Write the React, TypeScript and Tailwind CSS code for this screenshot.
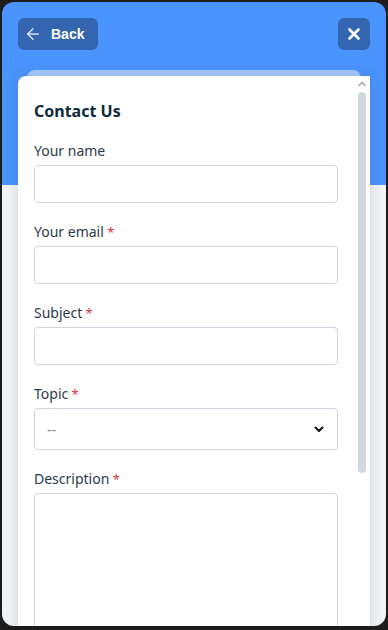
import React from "react";

const font = { fontFamily: '"Noto Sans", "Open Sans", sans-serif' };

function Label({ text, required }: { text: string; required?: boolean }) {
  return (
    <div className="text-[14px] leading-[20px] text-[#2d3a48] mb-1">
      {text}
      {required && <span className="text-[#e0303c] text-[13px]"> *</span>}
    </div>
  );
}

function Input() {
  return <div className="h-[38px] rounded-[4px] border border-[#cdd5df] bg-white" />;
}

export default function App() {
  return (
    <div className="h-[630px] w-[388px] bg-[#1c1c1c] pt-[2px] px-[2px] pb-[4px]" style={font}>
      <div className="relative h-[624px] w-[384px] overflow-hidden rounded-[12px] bg-[linear-gradient(to_bottom,#4a94fd_183px,#f1f3f6_183px)] flex flex-col">
        <div className="flex items-center justify-between px-4 pt-4">
          <button className="flex h-8 items-center gap-[9px] rounded-[6px] bg-[#3365b1] pl-[6px] pr-[14px] text-white">
            <svg width="18" height="18" viewBox="0 0 24 24" fill="none" stroke="rgba(255,255,255,0.8)" strokeWidth="2" strokeLinecap="round" strokeLinejoin="round">
              <path d="M19 12H5" />
              <path d="M12 19l-7-7 7-7" />
            </svg>
            <span className="text-[14px] font-bold" style={{ fontFamily: '"Liberation Sans", Arial, sans-serif' }}>Back</span>
          </button>
          <button className="flex h-8 w-8 items-center justify-center rounded-[6px] bg-[#3365b1]">
            <svg width="14" height="14" viewBox="0 0 14 14" fill="none" stroke="white" strokeWidth="2.6" strokeLinecap="round">
              <path d="M2.5 2.5l9 9M11.5 2.5l-9 9" />
            </svg>
          </button>
        </div>
        <div className="mt-5 flex flex-1 flex-col px-4">
          <div className="mx-[9px] h-[10px] rounded-t-[8px] bg-[#a5c8fc]" />
          <div className="relative -mt-[4px] flex flex-1 rounded-tl-[8px] bg-white shadow-[0_0_14px_rgba(30,41,59,0.14)]">
            <div className="flex-1 px-4 pt-[23px]">
              <div className="text-[16px] font-bold leading-[24px] text-[#0e2a3c]">Contact Us</div>
              <div className="mt-[18px]">
                <Label text="Your name" />
                <Input />
              </div>
              <div className="mt-[19px]">
                <Label text="Your email" required />
                <Input />
              </div>
              <div className="mt-[19px]">
                <Label text="Subject" required />
                <Input />
              </div>
              <div className="mt-[19px]">
                <Label text="Topic" required />
                <div className="flex h-[42px] items-center justify-between rounded-[4px] border border-[#cdd5df] pl-3 pr-[12px]">
                  <span className="text-[14px] text-[#7a8594]">--</span>
                  <svg width="12" height="12" viewBox="0 0 12 12" fill="none" stroke="#111" strokeWidth="2" strokeLinecap="round" strokeLinejoin="round">
                    <path d="M2.5 4.5L6 8l3.5-3.5" />
                  </svg>
                </div>
              </div>
              <div className="mt-[19px]">
                <Label text="Description" required />
                <div className="h-[160px] rounded-[4px] border border-[#cdd5df]" />
              </div>
            </div>
            <div className="flex w-4 flex-col items-center pt-[5px]">
              <svg width="10" height="6" viewBox="0 0 10 6" fill="none" stroke="#a3a9b0" strokeWidth="1.6">
                <path d="M1.5 5L5 1.5 8.5 5" />
              </svg>
              <div className="mt-[5px] h-[381px] w-2 rounded-full bg-[#cfd8e0]" />
            </div>
          </div>
        </div>
      </div>
    </div>
  );
}
